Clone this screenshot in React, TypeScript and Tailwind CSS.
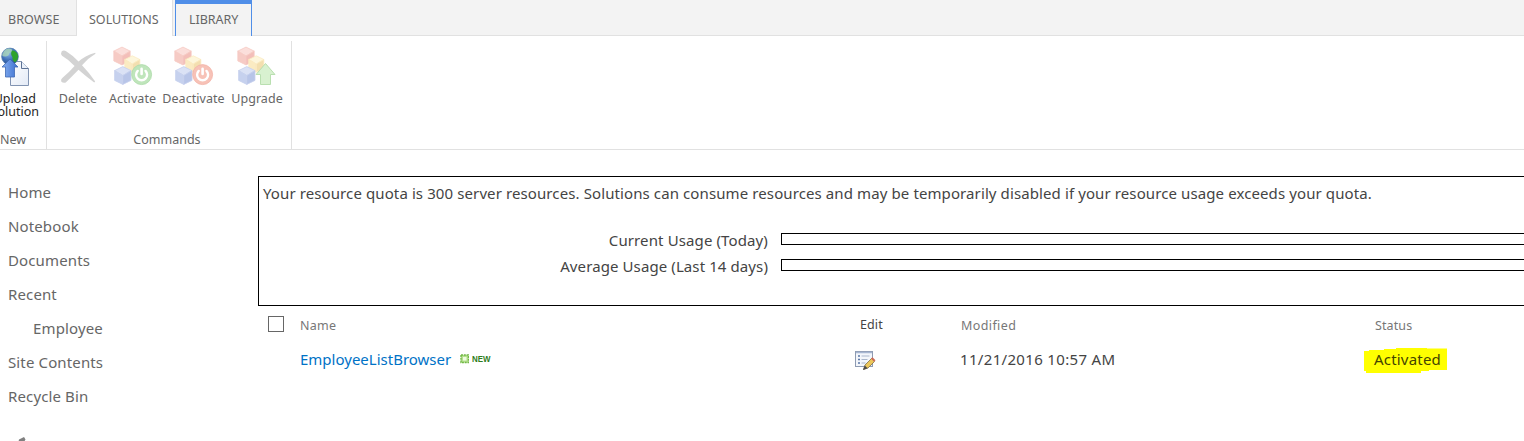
import React from "react";

function Cube({ cx, cy, r, light, mid, dark }: { cx: number; cy: number; r: number; light: string; mid: string; dark: string }) {
  const w = r * 0.92;
  const h = r * 0.55;
  return (
    <g stroke={mid} strokeWidth="0.8" strokeLinejoin="round">
      <path d={`M${cx} ${cy - r}L${cx + w} ${cy - h}L${cx} ${cy}L${cx - w} ${cy - h}Z`} fill={light} />
      <path d={`M${cx - w} ${cy - h}L${cx} ${cy}V${cy + r}L${cx - w} ${cy + h}Z`} fill={mid} />
      <path d={`M${cx + w} ${cy - h}L${cx} ${cy}V${cy + r}L${cx + w} ${cy + h}Z`} fill={dark} />
    </g>
  );
}

function Cubes({ children }: { children: React.ReactNode }) {
  return (
    <svg width="40" height="40" viewBox="0 0 40 40" className="block shrink-0">
      <Cube cx={9} cy={10} r={8.9} light="#fbdfdb" mid="#f6cbc5" dark="#f3bfb9" />
      <Cube cx={19.3} cy={18} r={8.2} light="#fdf6dc" mid="#fbebc2" dark="#f3dfb0" />
      <Cube cx={9.8} cy={29.500} r={8.9} light="#dbe2f5" mid="#c6d1ee" dark="#b8c5e8" />
      {children}
    </svg>
  );
}

function Power({ color, edge }: { color: string; edge: string }) {
  return (
    <g>
      <circle cx="28.6" cy="28.6" r="10" fill={color} stroke={edge} strokeWidth="0.8" />
      <path d="M24.700 24.900a5.500 5.500 0 1 0 7.800 0" fill="none" stroke="#fff" strokeWidth="2.400" strokeLinecap="round" />
      <path d="M28.600 22.800v5.200" stroke="#fff" strokeWidth="2.600" strokeLinecap="round" />
    </g>
  );
}

function UploadIcon() {
  return (
    <svg width="32" height="40" viewBox="0 0 32 40" className="block shrink-0">
      <defs>
        <radialGradient id="globe" cx="0.4" cy="0.3" r="0.7">
          <stop offset="0" stopColor="#8db8ea" />
          <stop offset="0.6" stopColor="#3f70b8" />
          <stop offset="1" stopColor="#2a5090" />
        </radialGradient>
        <linearGradient id="arrow" x1="0" x2="1">
          <stop offset="0" stopColor="#86aff0" />
          <stop offset="1" stopColor="#3c70d0" />
        </linearGradient>
        <linearGradient id="paper" x1="0" y1="0" x2="1" y2="1">
          <stop offset="0" stopColor="#fff" />
          <stop offset="1" stopColor="#e3eaf6" />
        </linearGradient>
      </defs>
      <path d="M10.5 15.5H21.5L28.5 22.5V39.5H10.5Z" fill="url(#paper)" stroke="#8294b2" />
      <path d="M21.5 15.5V22.5H28.5" fill="#eaf0f9" stroke="#5d7294" />
      <circle cx="10" cy="10.500" r="8.400" fill="url(#globe)" stroke="#5580ae" strokeWidth="0.7" />
      <path d="M4 5Q8 1 12 3.5Q13 6 9.5 7Q9 10 6 10.5Q2 11 2.2 9Z" fill="#a9d5b8" opacity="0.8" />
      <path d="M12 4.5Q16 4 18 9Q18.5 14 15 16.5Q12 14 12.5 11Q10 8 12 4.5Z" fill="#2fa32c" />
      <path d="M10 13L18 21H14.500V31H5.500V21H2Z" fill="url(#arrow)" stroke="#3f68b2" strokeWidth="0.8" strokeLinejoin="round" />
    </svg>
  );
}

function DeleteIcon() {
  return (
    <svg width="38" height="40" viewBox="0 0 38 40" className="block shrink-0">
      <path d="M2.6 5.5Q4.6 3.6 7.5 5.6Q14 9.6 19.5 15.6Q26.500 9.500 36.200 6.800L36.500 7.800Q28.500 12.500 23 19.300Q29.500 26 36.200 35.500L35.200 36.500Q27 30.500 19.500 23.800Q12.500 31 6.800 36.500Q4 37.500 2.200 35.400Q1.600 33.200 3.300 32Q10 26.500 15.600 20Q9.500 13.500 3 9.800Q1.400 7.500 2.600 5.500Z" fill="#d3d3d3" />
    </svg>
  );
}

function EditIcon() {
  return (
    <svg width="21" height="20" viewBox="0 0 21 20" className="block">
      <rect x="0.5" y="0.5" width="17" height="15" fill="#f3f6fb" stroke="#8e9bb2" />
      <path d="M1 1.500H17" stroke="#a6b6d2" strokeWidth="1.500" />
      <path d="M3 5h2M3 8.500h2M3 12h2" stroke="#5c78a8" strokeWidth="1.500" />
      <path d="M6.500 5h8M6.500 8.500h6M6.500 12h4" stroke="#a9b6cc" strokeWidth="1" />
      <path d="M8.500 18.500L10 14L16.500 7.500L19.500 10.500L13 17Z" fill="#ecc75a" stroke="#80704a" strokeWidth="0.8" />
      <path d="M16 7.500L17.500 6.200L20.500 9.200L19 10.800Z" fill="#cc6a58" />
      <path d="M8 19L9.800 14.500L12.600 17.300Z" fill="#4a4a4a" />
    </svg>
  );
}

function NewBadge() {
  return (
    <span className="flex h-[10px] items-center gap-[3px]">
      <svg width="9" height="10" viewBox="0 0 9 10" className="block">
        <rect x="1" y="1" width="7.500" height="7.500" fill="#b4e08e" stroke="#72b845" strokeWidth="1.400" strokeDasharray="2 0.800" />
        <rect x="3" y="3" width="3.500" height="3.500" fill="#effbe0" />
      </svg>
      <span className="origin-left scale-x-[0.88] font-['Liberation_Sans'] text-[9px] leading-[10px] font-bold text-[#2f7d1b]">NEW</span>
    </span>
  );
}

function Command({ label, icon, className }: { label: string; icon: React.ReactNode; className: string }) {
  return (
    <div className={`flex flex-col items-center ${className}`}>
      {icon}
      <span className="mt-1 text-[12.500px] leading-[18px] tracking-[0.06px] whitespace-nowrap">{label}</span>
    </div>
  );
}

const links = ["Home", "Notebook", "Documents", "Recent", "Employee", "Site Contents", "Recycle Bin"];

export default function App() {
  return (
    <div className="h-[441px] w-[1524px] overflow-hidden bg-white font-['Noto_Sans',sans-serif] text-[#444]">
      <div className="flex h-9 border-b border-[#e1e1e1] bg-[#f3f3f3] text-[12.500px] leading-[39px] text-[#666]">
        <div className="w-[76px] pl-2 tracking-[0.1px]">BROWSE</div>
        <div className="h-9 w-[97px] border-x border-[#e1e1e1] bg-white pl-3">SOLUTIONS</div>
        <div className="ml-[2px] h-9 w-[77px] border-x border-t-4 border-[#4f8ee8] bg-[#f3f3f3] pl-[13px] leading-[31px] tracking-[-0.05px]">LIBRARY</div>
      </div>

      <div className="flex h-[114px] border-b border-[#e1e1e1] pt-[5px] text-[#666]">
        <div className="flex w-[47px] flex-col border-r border-[#e1e1e1] pt-[5px]">
          <UploadIcon />
          <div className="-ml-[9px] flex w-12 flex-col items-end pt-[6px] text-[12.500px] leading-[13px] text-[#262626]">
            <span className="pr-[3px]">Upload</span>
            <span>Solution</span>
          </div>
          <span className="mt-[13px] text-[12.500px] leading-[18px]">New</span>
        </div>
        <div className="flex w-[245px] flex-col border-r border-[#e1e1e1] pt-[5px]">
          <div className="flex h-[85px]">
            <Command className="ml-3 w-[38px]" label="Delete" icon={<DeleteIcon />} />
            <Command
              className="ml-[15px] w-[41px]"
              label="Activate"
              icon={<Cubes><Power color="#bfe5bb" edge="#acdaa8" /></Cubes>}
            />
            <Command
              className="ml-[20px] w-[41px]"
              label="Deactivate"
              icon={<Cubes><Power color="#f7c2b7" edge="#f2b3a7" /></Cubes>}
            />
            <Command
              className="ml-[23px] w-[40px]"
              label="Upgrade"
              icon={
                <Cubes>
                  <path d="M28.500 17.500L38 28.500H33.500V38.500H23.500V28.500H19Z" fill="#d8f1d0" stroke="#b9dfb0" strokeLinejoin="round" />
                </Cubes>
              }
            />
          </div>
          <span className="w-[240px] text-center text-[12.500px] leading-[18px]">Commands</span>
        </div>
      </div>

      <div className="flex h-[291px] pt-[26px]">
        <nav className="-mt-px flex w-[258px] flex-col pl-2 text-[15px] leading-[34px] tracking-[0.13px] text-[#666]">
          {links.map((link) => (
            <span key={link} className={link === "Employee" ? "pl-[25px]" : ""}>{link}</span>
          ))}
          <svg width="24" height="22" viewBox="0 0 24 22" className="mt-[22px] ml-[5px] block shrink-0">
            <path d="M6 4.500L9 3L11 2L12.500 4.500L6 16L3 18Z" fill="#808080" />
          </svg>
        </nav>

        <main className="w-[1266px]">
          <div className="h-[130px] w-[1280px] border border-black pt-1 text-[15px]">
            <p className="pl-1 leading-[24px] tracking-[0.104px] whitespace-nowrap">
              Your resource quota is 300 server resources. Solutions can consume resources and may be temporarily disabled if your resource usage exceeds your quota.
            </p>
            <div className="mt-[22px] flex h-[26px]">
              <span className="w-[509px] shrink-0 text-right leading-[26px] tracking-[0.12px]">Current Usage (Today)</span>
              <div className="mt-[6px] ml-[13px] h-3 w-[760px] shrink-0 border border-black" />
            </div>
            <div className="flex h-[26px]">
              <span className="w-[509px] shrink-0 text-right leading-[26px] tracking-[0.1px]">Average Usage (Last 14 days)</span>
              <div className="mt-[6px] ml-[13px] h-3 w-[760px] shrink-0 border border-black" />
            </div>
          </div>

          <div className="grid h-[36px] grid-cols-[42px_560px_101px_414px_149px] text-[12.500px] leading-[40px] tracking-[0.1px] text-[#777]">
            <span className="mt-[10px] ml-[10px] h-4 w-4 border border-[#666]" />
            <span className="tracking-[0.3px]">Name</span>
            <span className="leading-[38px] text-[#444]">Edit</span>
            <span className="tracking-[0.4px]">Modified</span>
            <span>Status</span>
          </div>
          <div className="grid h-[36px] grid-cols-[42px_555px_105px_404px_160px] text-[15px] leading-[35px]">
            <span />
            <span className="-mt-[2px] flex items-center gap-[9px] text-[#0072c6]">
              EmployeeListBrowser
              <NewBadge />
            </span>
            <span className="pt-[9px]"><EditIcon /></span>
            <span className="tracking-[0.33px]">11/21/2016 10:57 AM</span>
            <span className="relative pl-[10px] tracking-[0.2px] text-[#444400]">
              <svg width="84" height="26" viewBox="0 0 84 26" className="absolute top-[5px] left-0">
                <path d="M0 4H5V3H20V2H32V1H63V1.500H83V23H65V24H57V26H2V24H0Z" fill="#ffff00" />
              </svg>
              <span className="relative">Activated</span>
            </span>
          </div>
        </main>
      </div>
    </div>
  );
}
